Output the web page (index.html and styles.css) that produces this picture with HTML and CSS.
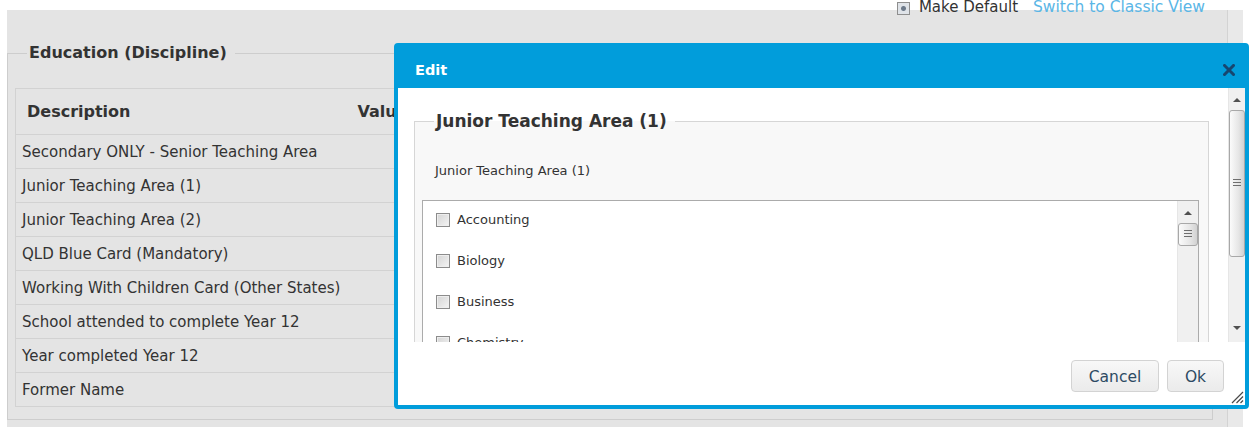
FILE: index.html
```html
<!DOCTYPE html>
<html lang="en">
<head>
<meta charset="utf-8">
<title>Education (Discipline)</title>
<link rel="stylesheet" href="styles.css">
</head>
<body>
<div class="page">
  <div class="panel">
    <div class="toolbar">
      <label class="make-default"><span class="tick"></span>Make Default</label>
      <a class="classic-link" href="#">Switch to Classic View</a>
    </div>
    <fieldset class="group">
      <legend>Education (Discipline)</legend>
      <table class="grid">
        <thead>
          <tr><th class="col-desc">Description</th><th>Value</th></tr>
        </thead>
        <tbody>
          <tr><td>Secondary ONLY - Senior Teaching Area</td><td></td></tr>
          <tr><td>Junior Teaching Area (1)</td><td></td></tr>
          <tr><td>Junior Teaching Area (2)</td><td></td></tr>
          <tr><td>QLD Blue Card (Mandatory)</td><td></td></tr>
          <tr><td>Working With Children Card (Other States)</td><td></td></tr>
          <tr><td>School attended to complete Year 12</td><td></td></tr>
          <tr><td>Year completed Year 12</td><td></td></tr>
          <tr><td>Former Name</td><td></td></tr>
        </tbody>
      </table>
    </fieldset>
  </div>
  <div class="gutter"></div>
</div>

<div class="dialog" role="dialog" aria-label="Edit">
  <div class="dialog-head">
    <span class="dialog-title">Edit</span>
    <button class="dialog-close" aria-label="Close">
      <svg width="12" height="12" viewBox="0 0 12 12"><path d="M1.5 1.5 L10.5 10.5 M10.5 1.5 L1.5 10.5" stroke="#17466f" stroke-width="3" stroke-linecap="square"/></svg>
    </button>
  </div>
  <div class="dialog-body">
    <div class="scroll">
      <div class="scroll-view">
        <fieldset class="group sub">
          <legend>Junior Teaching Area (1)</legend>
          <div class="field-label">Junior Teaching Area (1)</div>
          <div class="listbox">
            <div class="list-view">
              <label class="option"><span class="box"></span>Accounting</label>
              <label class="option"><span class="box"></span>Biology</label>
              <label class="option"><span class="box"></span>Business</label>
              <label class="option"><span class="box"></span>Chemistry</label>
              <label class="option"><span class="box"></span>Drama</label>
            </div>
            <div class="vscroll mini">
              <span class="arrow up"></span>
              <span class="thumb"><span class="grip-lines"></span></span>
            </div>
          </div>
        </fieldset>
      </div>
      <div class="vscroll">
        <span class="arrow up"></span>
        <span class="thumb"><span class="grip-lines"></span></span>
        <span class="spacer"></span>
        <span class="arrow down"></span>
      </div>
    </div>
    <div class="dialog-foot">
      <button class="btn btn-cancel">Cancel</button>
      <button class="btn btn-ok">Ok</button>
    </div>
  </div>
  <svg class="resize-grip" width="15" height="15" viewBox="0 0 15 15">
    <path d="M14 3 L3 14 M14 7.5 L7.5 14 M14 11.5 L11.5 14" stroke="#4a4a4a" stroke-width="1.2"/>
  </svg>
</div>
</body>
</html>
```

FILE: styles.css
```css
* {
  box-sizing: border-box;
}

html, body {
  margin: 0;
  padding: 0;
  background: #ffffff;
}

body {
  font-family: "DejaVu Sans", Verdana, sans-serif;
  color: #333333;
  height: 427px;
  overflow: hidden;
}

/* ---- page behind the dialog ---- */
.page {
  display: flex;
  margin: 10px 7px 0 7px;
  height: 417px;
}

.panel {
  flex: 1;
  display: flex;
  flex-direction: column;
  background: #e4e4e4;
  border-right: 1px solid #d3d3d3;
  padding: 0 14px 20px 0;
}

.gutter {
  width: 15px;
  background: #e9e9e9;
}

.toolbar {
  display: flex;
  justify-content: flex-end;
  align-items: baseline;
  gap: 15px;
  height: 18px;
  margin: -12px 8px 0 0;
  font-size: 15px;
  line-height: 18px;
}

.make-default {
  color: #333333;
}

.tick {
  display: inline-block;
  width: 13px;
  height: 13px;
  margin-right: 9px;
  vertical-align: -3px;
  border: 1px solid #8e8e8e;
  background: radial-gradient(circle at 50% 50%, #6d7a8a 0 2px, #dfe3e8 3px);
}

.classic-link {
  color: #5ab6e6;
  text-decoration: none;
  font-size: 15.5px;
}

.group {
  margin: 27px 0 0 0;
  border: 1px solid #cdcdcd;
  padding: 25px 13px 12px 7px;
  min-width: 0;
}

.group > legend {
  font-weight: bold;
  font-size: 16px;
  line-height: 20px;
  margin-left: 12px;
  padding: 0 8px 0 2px;
  color: #333333;
}

.grid {
  width: 100%;
  border-collapse: collapse;
  font-size: 15px;
  border-top: 1px solid #d2d2d2;
  border-left: 1px solid #d2d2d2;
}

.grid th {
  text-align: left;
  font-weight: bold;
  font-size: 16px;
  height: 46px;
  padding: 0 11px;
  border-bottom: 1px solid #d2d2d2;
}

.grid .col-desc {
  width: 330px;
}

.grid td {
  height: 34px;
  padding: 0 6px;
  border-bottom: 1px solid #d2d2d2;
  white-space: nowrap;
}

/* ---- modal dialog ---- */
.dialog {
  position: absolute;
  left: 394px;
  top: 43px;
  width: 855px;
  height: 366px;
  border: 4px solid #019ddb;
  border-radius: 4px;
  background: #ffffff;
  display: flex;
  flex-direction: column;
}

.dialog-head {
  height: 41px;
  flex: none;
  display: flex;
  align-items: center;
  justify-content: space-between;
  background: #019ddb;
  padding: 4px 10px 0 17px;
}

.dialog-title {
  color: #ffffff;
  font-weight: bold;
  font-size: 14.5px;
}

.dialog-close {
  border: 0;
  padding: 0;
  background: none;
  width: 12px;
  height: 12px;
  display: block;
}

.dialog-close svg {
  display: block;
}

.dialog-body {
  flex: 1;
  display: flex;
  flex-direction: column;
  min-height: 0;
}

.scroll {
  height: 254px;
  flex: none;
  display: flex;
  overflow: hidden;
}

.scroll-view {
  flex: 1;
  overflow: hidden;
  padding: 0 19px 0 16px;
}

.group.sub {
  margin-top: 23px;
  background: #f8f8f8;
  border-color: #d6d6d6;
  padding: 0 9px 0 7px;
}

.group.sub > legend {
  font-size: 17px;
}

.field-label {
  font-size: 13px;
  line-height: 20px;
  margin-top: 30px;
  padding-left: 13px;
}

.listbox {
  margin-top: 19px;
  height: 220px;
  border: 1px solid #ababab;
  background: #ffffff;
  display: flex;
}

.list-view {
  flex: 1;
  padding-left: 13px;
}

.option {
  display: flex;
  align-items: center;
  height: 41px;
  padding-bottom: 3px;
  font-size: 13px;
  line-height: 20px;
}

.box {
  width: 14px;
  height: 14px;
  margin-right: 7px;
  border: 1px solid #8c8c8c;
  background: linear-gradient(135deg, #d4d4d4, #f4f4f4);
  box-shadow: inset 0 0 0 1px #eeeeee;
}

/* scrollbars */
.vscroll {
  width: 17px;
  flex: none;
  display: flex;
  flex-direction: column;
  align-items: center;
  background: #f0f0f0;
  border-left: 1px solid #e6e6e6;
}

.vscroll.mini {
  width: 21px;
}

.arrow {
  width: 0;
  height: 0;
  border-left: 4px solid transparent;
  border-right: 4px solid transparent;
  margin: 10px 0 8px;
}

.arrow.up {
  border-bottom: 4px solid #505050;
}

.arrow.down {
  border-top: 4px solid #505050;
  margin: 0 0 12px;
}

.thumb {
  width: 100%;
  height: 147px;
  border: 1px solid #a8a8a8;
  border-radius: 3px;
  background: linear-gradient(90deg, #fbfbfb, #e6e6e6 60%, #d2d2d2);
  display: flex;
  align-items: center;
  justify-content: center;
}

.vscroll.mini .thumb {
  height: 23px;
  width: 20px;
}

.grip-lines {
  width: 8px;
  height: 9px;
  background: repeating-linear-gradient(180deg, #6f6f6f 0 1px, transparent 1px 3px);
}

.spacer {
  flex: 1;
}

.dialog-foot {
  flex: 1;
  display: flex;
  justify-content: flex-end;
  align-items: flex-start;
  gap: 8px;
  padding: 18px 21px 0 0;
}

.btn {
  height: 32px;
  font-family: "DejaVu Sans", Verdana, sans-serif;
  font-size: 15.5px;
  color: #2d4a63;
  border: 1px solid #d3d3d3;
  border-radius: 4px;
  background: linear-gradient(180deg, #f8f8f8, #ebebeb);
  padding: 2px 0 0;
}

.btn-cancel {
  width: 88px;
}

.btn-ok {
  width: 57px;
}

.resize-grip {
  position: absolute;
  right: 1px;
  bottom: 1px;
}
```
